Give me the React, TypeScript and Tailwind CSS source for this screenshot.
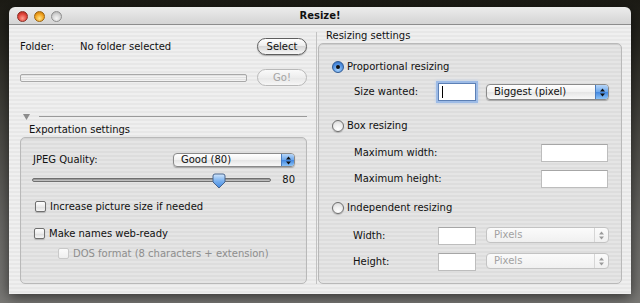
import type { ReactNode } from 'react';

// Mac OS X "Resize!" utility window, Aqua look

const FONT = "font-['DejaVu_Sans','Liberation_Sans',sans-serif]";
const PINSTRIPE =
  'bg-[repeating-linear-gradient(to_bottom,#efefef_0px,#efefef_2px,#e7e7e7_2px,#e7e7e7_4px)]';

function Arrows({ color }: { color: string }) {
  return (
    <svg width="5" height="9" viewBox="0 0 5 9">
      <path d="M0 3.6 L2.5 0.6 L5 3.6 Z" fill={color} />
      <path d="M0 5.4 L2.5 8.4 L5 5.4 Z" fill={color} />
    </svg>
  );
}

function AquaButton({ children, disabled }: { children: ReactNode; disabled?: boolean }) {
  return (
    <div
      className={
        disabled
          ? 'flex h-[17px] w-[50px] items-center justify-center rounded-full border border-[#b9b9b9] bg-[linear-gradient(#fafafa,#ededed_50%,#e6e6e6_50%,#f6f6f6)] text-[#a4a4a4]'
          : 'flex h-[17px] w-[50px] items-center justify-center rounded-full border border-[#5e5e5e] bg-[linear-gradient(#ffffff,#ececec_50%,#d8d8d8_50%,#f7f7f7)] shadow-[0_1px_1px_rgba(0,0,0,0.25)]'
      }
    >
      {children}
    </div>
  );
}

function BluePopup({ label, className }: { label: string; className: string }) {
  return (
    <div
      className={`flex items-stretch overflow-hidden rounded-[4px] border border-[#8a8a8a] bg-[linear-gradient(#ffffff,#f1f1f1_50%,#e4e4e4_50%,#f8f8f8)] shadow-[0_1px_1px_rgba(0,0,0,0.25)] ${className}`}
    >
      <span className="flex flex-1 items-center pl-[7px]">{label}</span>
      <span className="flex w-[13px] items-center justify-center border-l border-[#4a7dbf] bg-[linear-gradient(#b7d6f8,#6aa6ec_50%,#3f85e0_50%,#8cc3f7)]">
        <Arrows color="#101010" />
      </span>
    </div>
  );
}

function GreyPopup({ label }: { label: string }) {
  return (
    <div className="flex h-[16px] w-[123px] items-stretch rounded-[4px] border border-[#c3c3c3] bg-[linear-gradient(#fbfbfb,#f0f0f0)] text-[#a2a2a2]">
      <span className="flex flex-1 items-center pl-[7px]">{label}</span>
      <span className="flex w-[14px] items-center justify-center border-l border-[#d6d6d6]">
        <Arrows color="#9a9a9a" />
      </span>
    </div>
  );
}

function Check({ disabled }: { disabled?: boolean }) {
  return (
    <span
      className={
        disabled
          ? 'block h-[11px] w-[11px] rounded-[2px] border border-[#c9c9c9] bg-[linear-gradient(#fbfbfb,#eeeeee)]'
          : 'block h-[11px] w-[11px] rounded-[2px] border border-[#707070] bg-[linear-gradient(#ffffff,#ececec_50%,#dcdcdc_50%,#f6f6f6)] shadow-[0_1px_1px_rgba(0,0,0,0.2)]'
      }
    />
  );
}

function Radio({ on }: { on?: boolean }) {
  return on ? (
    <span className="flex h-[12px] w-[12px] items-center justify-center rounded-full border border-[#2f5a93] bg-[radial-gradient(circle_at_50%_75%,#a9d3fb,#4f8fe0_60%,#2a64b8)]">
      <span className="block h-[4px] w-[4px] rounded-full bg-[#111]" />
    </span>
  ) : (
    <span className="block h-[12px] w-[12px] rounded-full border border-[#6e6e6e] bg-[radial-gradient(circle_at_50%_80%,#ffffff,#ececec_55%,#cfcfcf)] shadow-[0_1px_1px_rgba(0,0,0,0.2)]" />
  );
}

function Field({ className, focused }: { className: string; focused?: boolean }) {
  return (
    <div
      className={
        focused
          ? `flex items-center border border-[#5b7fb5] bg-white pl-[3px] shadow-[0_0_0_2px_#9dbbe6,0_0_3px_2px_#b7cff0] ${className}`
          : `border border-[#bdbdbd] border-t-[#a6a6a6] bg-white ${className}`
      }
    >
      {focused && <span className="block h-[12px] w-[1px] bg-black" />}
    </div>
  );
}

function SliderThumb() {
  return (
    <svg width="14" height="16" viewBox="0 0 14 16">
      <defs>
        <linearGradient id="thumb" x1="0" y1="0" x2="0" y2="1">
          <stop offset="0" stopColor="#d3e7fc" />
          <stop offset="0.5" stopColor="#7ab1ef" />
          <stop offset="1" stopColor="#3f86df" />
        </linearGradient>
      </defs>
      <path
        d="M1 3 Q1 1 3 1 H11 Q13 1 13 3 V9 L7 15 L1 9 Z"
        fill="url(#thumb)"
        stroke="#48648c"
        strokeWidth="1"
      />
    </svg>
  );
}

export default function App() {
  return (
    <div
      className={`h-[303px] w-[640px] overflow-hidden bg-[linear-gradient(180deg,#1c1b15_0%,#27261f_14%,#4b4a45_45%,#6a6966_75%,#7a7976_100%)] pl-[9px] pt-[7px] text-[10px] leading-none text-[#111] ${FONT}`}
    >
      <div className="flex h-[287px] w-[622px] flex-col overflow-hidden rounded-t-[6px] shadow-[0_3px_14px_rgba(0,0,0,0.6)]">
        {/* title bar */}
        <div className="grid h-[18px] grid-cols-[60px_1fr_60px] items-center border-b border-[#8c8c8c] bg-[linear-gradient(#ececec,#d4d4d4)]">
          <div className="flex items-center gap-[6px] pl-[8px] pt-[2px]">
            <span className="block h-[11px] w-[11px] rounded-full border border-[#8a2d24] bg-[radial-gradient(circle_at_50%_70%,#ff9c8e,#e0443a_55%,#a3231a)]" />
            <span className="block h-[11px] w-[11px] rounded-full border border-[#9a6410] bg-[radial-gradient(circle_at_50%_70%,#ffe48a,#f1a21e_55%,#bb6d05)]" />
            <span className="block h-[11px] w-[11px] rounded-full border border-[#8e8e8e] bg-[radial-gradient(circle_at_50%_70%,#f6f6f6,#d2d2d2_55%,#a4a4a4)]" />
          </div>
          <div className="pt-[1px] text-center text-[10px] font-bold">Resize!</div>
          <div />
        </div>

        {/* body */}
        <div className={`flex flex-1 ${PINSTRIPE}`}>
          {/* left column */}
          <div className="flex w-[307px] flex-col pl-[11px] pr-[9px] pt-[13px]">
            <div className="flex h-[17px] items-center">
              <span className="w-[60px]">Folder:</span>
              <span className="flex-1">No folder selected</span>
              <AquaButton>Select</AquaButton>
            </div>
            <div className="mt-[14px] flex h-[17px] items-center">
              <div className="mr-[10px] h-[8px] flex-1 rounded-[2px] border border-[#a8a8a8] bg-[repeating-linear-gradient(to_bottom,#e2e2e2_0px,#e2e2e2_1px,#f2f2f2_1px,#f2f2f2_2px)]" />
              <AquaButton disabled>Go!</AquaButton>
            </div>
            <div className="mt-[28px] flex h-[6px] items-center">
              <svg className="ml-[3px]" width="7" height="6" viewBox="0 0 7 6">
                <path d="M0 0 H7 L3.5 6 Z" fill="#8c8c8c" />
              </svg>
              <div className="ml-[9px] h-[2px] flex-1 border-t border-[#9a9a9a] border-b-white" />
            </div>
            <div className="mt-[4px] h-[12px] pl-[9px] leading-[12px]">Exportation settings</div>
            <div className="mt-[1px] flex h-[147px] flex-col rounded-[5px] border border-[#b9b9b9] bg-[#0000000a] pl-[12px] pr-[11px] pt-[15px] shadow-[inset_0_1px_1px_rgba(0,0,0,0.08)]">
              <div className="flex h-[14px] items-center justify-between">
                <span>JPEG Quality:</span>
                <BluePopup label="Good (80)" className="h-[14px] w-[122px]" />
              </div>
              <div className="mt-[5px] flex h-[16px] items-center">
                <div className="relative -ml-[1px] h-[16px] w-[242px]">
                  <div className="absolute left-0 right-0 top-[6px] h-[4px] rounded-full border border-[#6f6f6f] bg-[linear-gradient(#8a8a8a,#cfcfcf)]" />
                  <div className="absolute left-[180px] top-[1px]">
                    <SliderThumb />
                  </div>
                </div>
                <span className="ml-[11px]">80</span>
              </div>
              <div className="mt-[13px] flex h-[11px] items-center gap-[4px] pl-[2px]">
                <Check />
                <span>Increase picture size if needed</span>
              </div>
              <div className="mt-[16px] flex h-[11px] items-center gap-[4px] pl-[1px]">
                <Check />
                <span>Make names web-ready</span>
              </div>
              <div className="mt-[9px] flex h-[11px] items-center gap-[4px] pl-[25px] text-[#8e8e8e]">
                <Check disabled />
                <span>DOS format (8 characters + extension)</span>
              </div>
            </div>
          </div>

          {/* right column */}
          <div className="flex w-[315px]">
            <div className="mb-[10px] mt-[7px] w-[1px] bg-[#c2c2c2]" />
            <div className="flex flex-1 flex-col pl-[1px] pr-[9px] pt-[5px]">
              <div className="h-[12px] pl-[8px] leading-[12px]">Resizing settings</div>
              <div className="mt-[1px] flex h-[241px] flex-col rounded-[5px] border border-[#b9b9b9] bg-[#0000000a] pl-[13px] pt-[17px] shadow-[inset_0_1px_1px_rgba(0,0,0,0.08)]">
                <div className="flex h-[12px] items-center gap-[3px]">
                  <Radio on />
                  <span>Proportional resizing</span>
                </div>
                <div className="mt-[10px] flex h-[18px] items-center">
                  <span className="ml-[22px] w-[84px]">Size wanted:</span>
                  <Field focused className="h-[18px] w-[38px]" />
                  <BluePopup label="Biggest (pixel)" className="ml-[10px] h-[16px] w-[123px]" />
                </div>
                <div className="mt-[19px] flex h-[12px] items-center gap-[3px]">
                  <Radio />
                  <span>Box resizing</span>
                </div>
                <div className="mt-[12px] flex h-[18px] items-center">
                  <span className="ml-[22px] w-[187px]">Maximum width:</span>
                  <Field className="h-[18px] w-[67px]" />
                </div>
                <div className="mt-[8px] flex h-[18px] items-center">
                  <span className="ml-[22px] w-[187px]">Maximum height:</span>
                  <Field className="h-[18px] w-[67px]" />
                </div>
                <div className="mt-[14px] flex h-[12px] items-center gap-[3px]">
                  <Radio />
                  <span>Independent resizing</span>
                </div>
                <div className="mt-[13px] flex h-[18px] items-center">
                  <span className="ml-[21px] w-[85px]">Width:</span>
                  <Field className="h-[18px] w-[38px]" />
                  <div className="ml-[10px] -mt-[2px]">
                    <GreyPopup label="Pixels" />
                  </div>
                </div>
                <div className="mt-[8px] flex h-[18px] items-center">
                  <span className="ml-[21px] w-[85px]">Height:</span>
                  <Field className="h-[18px] w-[38px]" />
                  <div className="ml-[10px] -mt-[2px]">
                    <GreyPopup label="Pixels" />
                  </div>
                </div>
              </div>
            </div>
          </div>
        </div>
      </div>
    </div>
  );
}
